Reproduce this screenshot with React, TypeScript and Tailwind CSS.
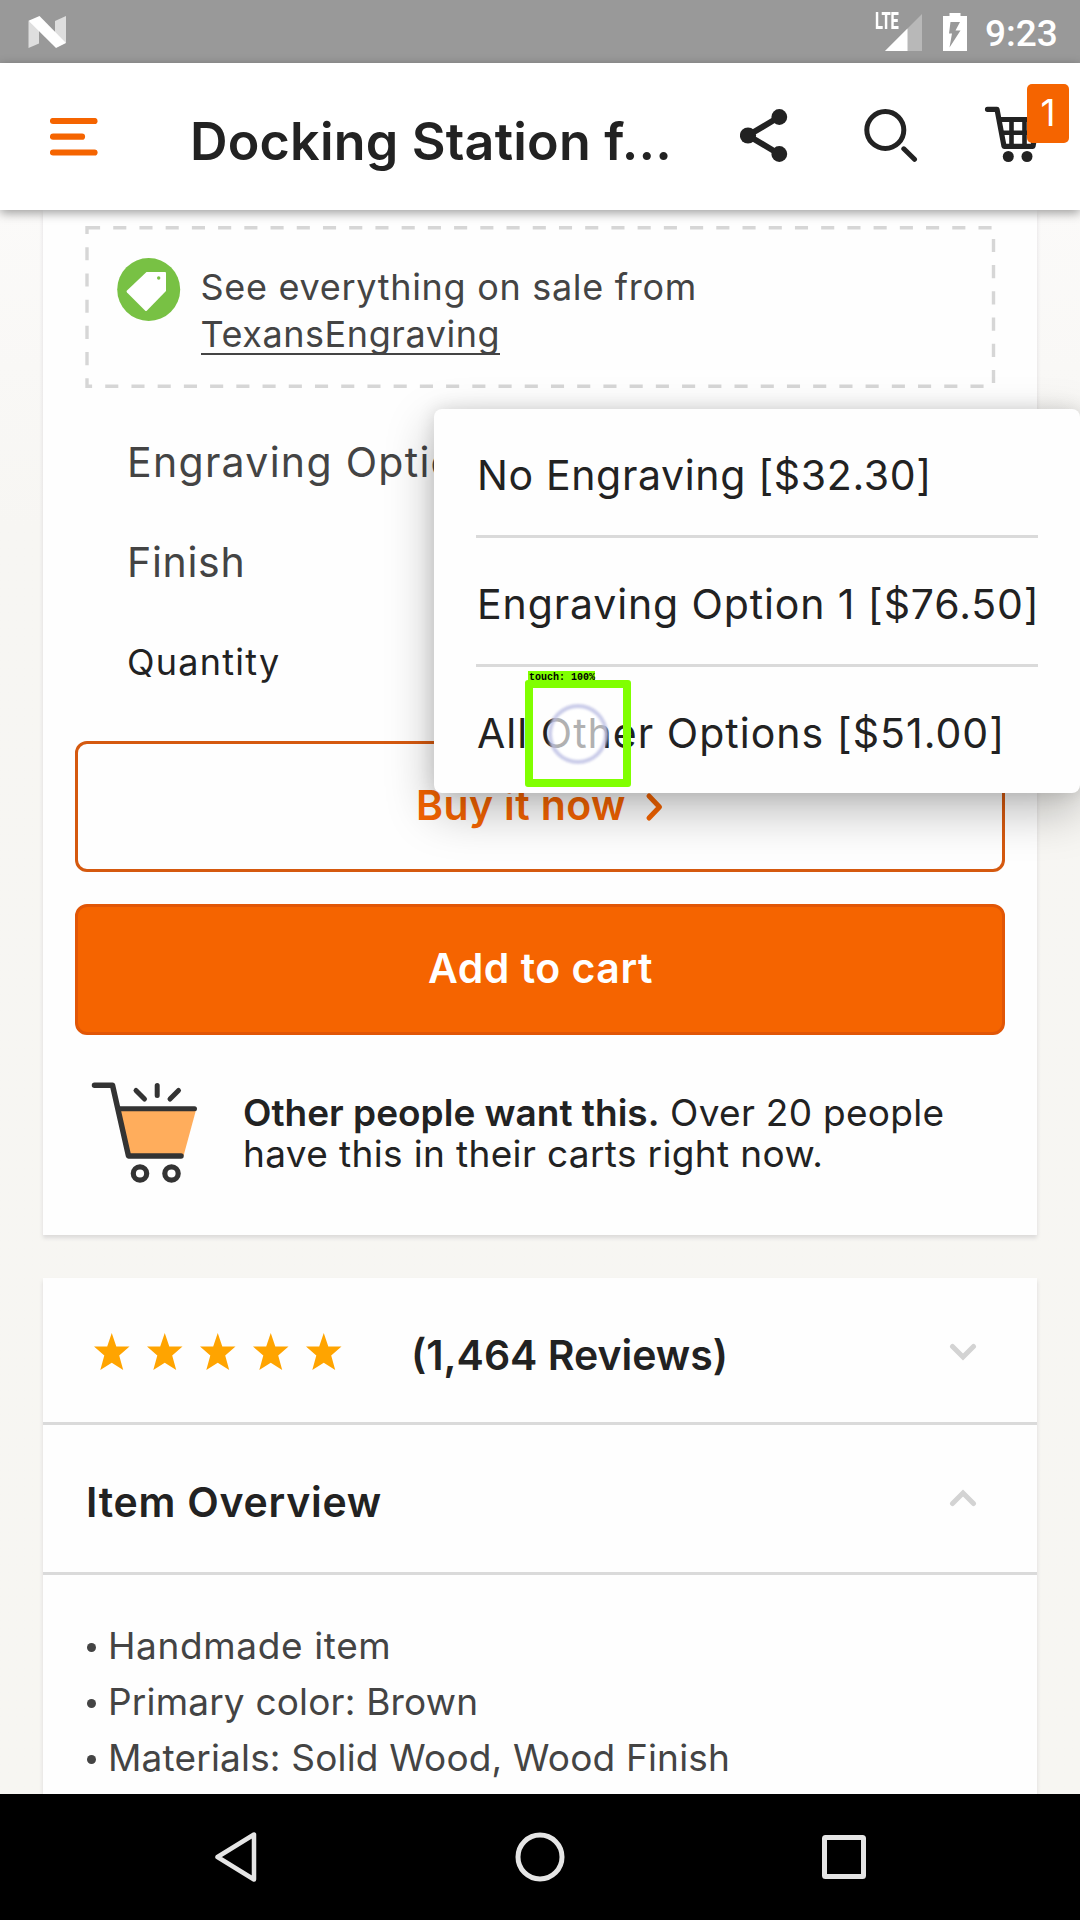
import type { ReactNode } from "react";

function StatusBar() {
  return (
    <div className="flex h-[63px] shrink-0 items-center bg-[#999999] pl-7 pr-[19px] text-white">
      <svg width="38" height="32" viewBox="0 0 38 32">
        <path d="M0.5 5L11 9V27.500L0.500 32z" fill="#dedede" />
        <path d="M27 5L38 0V27L27 23z" fill="#dedede" />
        <path d="M0.500 4.700L11.500 0L38 27L28 32z" fill="#fff" />
      </svg>
      <div className="ml-auto flex items-center">
        <div className="relative h-[38px] w-[46px]">
          <svg className="absolute left-[9px] top-px" width="37" height="37" viewBox="0 0 37 37">
            <path d="M37 0V37H0z" fill="#b8b8b8" />
            <path d="M22.500 14.500V37H0z" fill="#fff" />
          </svg>
          <span className="absolute left-[-1px] top-[-2px] origin-left scale-x-[0.64] font-['Roboto'] text-[23px] font-extrabold leading-[22px]">
            LTE
          </span>
        </div>
        <svg className="ml-[21px]" width="24" height="38" viewBox="0 0 24 38">
          <path d="M6.500 0H17.500V3H24V38H0V3H6.500z" fill="#fff" />
          <path d="M7.500 9H17L12.500 17.500H17.500L6.500 34.500L9 20.500H6z" fill="#999" />
        </svg>
        <span className="ml-[18px] mt-[3px] w-[76px] whitespace-nowrap font-['Roboto'] text-[37px] font-medium leading-none">9:23</span>
      </div>
    </div>
  );
}

function Header() {
  return (
    <header className="relative z-10 flex h-[147px] shrink-0 bg-white shadow-[0_3px_10px_rgba(0,0,0,0.38)]">
      <svg className="ml-[50px] mt-[55px] shrink-0" width="48" height="38" viewBox="0 0 48 38">
        <g stroke="#f56400" strokeWidth="6.200" strokeLinecap="round">
          <path d="M3 3H44.500" />
          <path d="M3 18.700H32" />
          <path d="M3 34.500H44.500" />
        </g>
      </svg>
      <h1 className="ml-[92px] mt-[44px] w-[550px] whitespace-nowrap text-[52px] font-semibold leading-[70px] tracking-[0.2px] text-[#222]">
        Docking Station f...
      </h1>
      <svg className="mt-[45px] shrink-0" width="48" height="56" viewBox="740 108 48 56">
        <path d="M779 117L748 135.500L779 154" fill="none" stroke="#222" strokeWidth="6" />
        <circle cx="779.300" cy="117" r="7.900" fill="#222" />
        <circle cx="748" cy="135.500" r="8.100" fill="#222" />
        <circle cx="779.300" cy="154" r="7.900" fill="#222" />
      </svg>
      <svg className="ml-[76px] mt-[45px] shrink-0" width="54" height="56" viewBox="864 108 54 56">
        <circle cx="885.300" cy="130" r="18.500" fill="none" stroke="#222" strokeWidth="5" />
        <path d="M903.800 148.800L914.500 159.300" stroke="#222" strokeWidth="5" strokeLinecap="round" />
      </svg>
      <div className="relative ml-[66px] mt-[43px] h-[60px] w-[86px] shrink-0">
        <svg width="56" height="60" viewBox="984 106 56 60">
          <g fill="none" stroke="#222" strokeWidth="5.200" strokeLinejoin="round">
            <path d="M987.500 109.300H997L1004 146.300H1033L1038 119.500H999" strokeLinecap="round" />
            <path d="M1001 132.800H1036" strokeWidth="4.600" />
            <path d="M1011.500 120V146M1024.500 120V146" strokeWidth="4.600" />
          </g>
          <circle cx="1008.300" cy="156.500" r="5.500" fill="#222" />
          <circle cx="1027" cy="156.500" r="5.500" fill="#222" />
        </svg>
        <div className="absolute left-[43px] top-[-22px] flex h-[59px] w-[42px] items-center justify-center rounded-[5px] bg-[#f56400] pb-[2px] text-[37px] leading-none text-white">
          1
        </div>
      </div>
    </header>
  );
}

function SaleBox() {
  return (
    <div className="relative ml-[42px] mt-4 flex h-[162px] w-[911px] text-[36px] text-[#444]">
      <svg className="absolute inset-0" width="911" height="162">
        <path
          d="M2 1.700H908.500V160.300H2Z"
          fill="none"
          stroke="#d6d6d6"
          strokeWidth="3.400"
          strokeDasharray="13.100 13.120"
        />
      </svg>
      <svg className="ml-8 mt-8 shrink-0" width="64" height="64" viewBox="0 0 64 64">
        <circle cx="31.700" cy="31.500" r="31.500" fill="#78c144" />
        <path
          d="M29.500 14H48Q49 14 49 15V33L30 52.500Q29 53.500 28 52.500L10 34.500Q9 33.500 10 32.500z"
          fill="#fff"
        />
        <circle cx="41.700" cy="20" r="1.700" fill="#78c144" />
      </svg>
      <div className="ml-[19.500px] mt-9 whitespace-nowrap leading-[48px]">
        <div className="relative top-px tracking-[0.7px]">See everything on sale from</div>
        <div className="flex">
          <span className="h-[45px] border-b-2 border-[#444] leading-[48px] tracking-[0.56px]">TexansEngraving</span>
        </div>
      </div>
    </div>
  );
}

function PopularCart() {
  return (
    <svg className="ml-[48px] shrink-0" width="108" height="104" viewBox="91 1081 108 104">
      <path d="M120 1110H196L183.500 1156H129z" fill="#ffad5c" />
      <g fill="none" stroke="#333" strokeWidth="5.500" strokeLinecap="round" strokeLinejoin="round">
        <path d="M94.500 1085.200H112.500L128.500 1156H181" />
        <path d="M119 1108.800H194.500" strokeWidth="5" />
        <path d="M136 1090.500L144.500 1099M157.200 1085.500V1095.500M178.500 1090.500L170 1099" strokeWidth="5" />
        <circle cx="140" cy="1173.500" r="6.700" strokeWidth="5.200" />
        <circle cx="171.500" cy="1173.500" r="6.700" strokeWidth="5.200" />
      </g>
    </svg>
  );
}

function OptionRow({ children }: { children: ReactNode }) {
  return <div className="flex h-[100px] items-center pl-[84px] text-[#444]">{children}</div>;
}

function PurchaseCard() {
  return (
    <section className="mx-[43px] flex h-[1025px] shrink-0 flex-col bg-[#fefefe] shadow-[0_3px_4px_rgba(60,50,70,0.14)]">
      <SaleBox />
      <div className="mt-6 text-[41px] leading-[50px]">
        <OptionRow>
          <span className="whitespace-nowrap tracking-[1.29px]">Engraving Options</span>
        </OptionRow>
        <OptionRow>
          <span className="tracking-[0.7px]">Finish</span>
        </OptionRow>
        <OptionRow>
          <span className="text-[36px] tracking-[1.25px] text-[#222]">Quantity</span>
        </OptionRow>
      </div>
      <button className="ml-8 mt-[29px] flex h-[131px] w-[930px] items-center rounded-xl border-[3px] border-[#d5590f] pl-[338px] text-[41px] font-semibold text-[#f56400]">
        <span className="mb-[3px] whitespace-nowrap leading-[50px] tracking-[0.38px]">Buy it now</span>
        <svg className="ml-[19px]" width="20" height="30" viewBox="0 0 20 30">
          <path
            d="M4 4L14.500 15L4 26"
            fill="none"
            stroke="#f56400"
            strokeWidth="5"
            strokeLinecap="round"
            strokeLinejoin="round"
          />
        </svg>
      </button>
      <button className="ml-8 mt-8 flex h-[131px] w-[930px] items-center rounded-xl border-[3px] border-[#e15606] bg-[#f56400] pl-[350px] text-[41px] font-semibold text-white">
        <span className="mb-[3px] whitespace-nowrap leading-[50px] tracking-[0.5px]">Add to cart</span>
      </button>
      <div className="flex h-[196px] items-center">
        <PopularCart />
        <p className="ml-[44px] whitespace-nowrap text-[37px] leading-[41px] text-[#222]">
          <span className="font-semibold">Other people want this.</span>
          <span className="tracking-[0.28px]"> Over 20 people</span>
          <br />
          <span className="tracking-[0.36px]">have this in their carts right now.</span>
        </p>
      </div>
    </section>
  );
}

function Stars() {
  return (
    <div className="flex gap-[17.600px]">
      {[0, 1, 2, 3, 4].map((i) => (
        <svg key={i} width="35.500" height="37" viewBox="0 0 35.500 37">
          <path
            d="M17.750 0L22.300 13.500H35.500L25.200 22.600L29.200 37L17.750 29.800L6.300 37L10.300 22.600L0 13.500H13.200z"
            fill="#ffa400"
          />
        </svg>
      ))}
    </div>
  );
}

function Chevron({ up = false }: { up?: boolean }) {
  return (
    <svg width="28" height="18" viewBox="0 0 28 18">
      <path
        d={up ? "M3.500 14.500L14 4L24.500 14.500" : "M3.500 3.500L14 14L24.500 3.500"}
        fill="none"
        stroke="#d3d3d3"
        strokeWidth="5"
        strokeLinecap="round"
      />
    </svg>
  );
}

const FACTS = [
  { text: "Handmade item", tracking: "tracking-[0.62px]" },
  { text: "Primary color: Brown", tracking: "tracking-[0.18px]" },
  { text: "Materials: Solid Wood, Wood Finish", tracking: "tracking-[0.18px]" },
];

function DetailsCard() {
  return (
    <section className="mx-[43px] mt-[43px] h-[600px] shrink-0 bg-[#fefefe] shadow-[0_3px_4px_rgba(60,50,70,0.14)]">
      <div className="flex h-[147px] items-center border-b-[3px] border-[#dadada] pl-[51px] pr-[60px] text-[#222]">
        <div className="mt-0.5">
          <Stars />
        </div>
        <span className="ml-[69px] mt-[9px] whitespace-nowrap text-[41px] font-semibold leading-[50px]">
          (1,464 Reviews)
        </span>
        <div className="ml-auto mt-1">
          <Chevron />
        </div>
      </div>
      <div className="flex h-[150px] items-center justify-between border-b-[3px] border-[#dadada] pl-[43px] pr-[60px] text-[#222]">
        <span className="mt-[7px] whitespace-nowrap text-[41px] font-semibold leading-[50px] tracking-[0.74px]">
          Item Overview
        </span>
        <div className="-mt-0.5">
          <Chevron up />
        </div>
      </div>
      <ul className="pl-[43px] pt-[43px] text-[37px] leading-[56px] text-[#444]">
        {FACTS.map(({ text, tracking }) => (
          <li key={text} className="flex items-center whitespace-nowrap">
            <span className="ml-px mr-3 mt-0.5 size-[9px] rounded-full bg-[#444]" />
            <span className={tracking}>{text}</span>
          </li>
        ))}
      </ul>
    </section>
  );
}

function OptionsMenu() {
  return (
    <div className="absolute left-[434px] top-[409px] z-20 h-[384px] w-[646px] rounded-lg bg-[#fefefe] pl-[42px] text-[41px] text-[#222] shadow-[0_18px_48px_rgba(0,0,0,0.27),0_0_18px_rgba(0,0,0,0.12)]">
      <div className="flex h-[129px] w-[562px] items-center whitespace-nowrap border-b-[3px] border-[#dadada] pl-px pt-[6px] leading-[50px] tracking-[0.65px]">
        No Engraving [$32.30]
      </div>
      <div className="flex h-[129px] w-[562px] items-center whitespace-nowrap border-b-[3px] border-[#dadada] pl-px pt-[6px] leading-[50px] tracking-[0.88px]">
        Engraving Option 1 [$76.50]
      </div>
      <div className="flex h-[129px] w-[562px] items-center whitespace-nowrap pl-px pt-[2px] leading-[50px] tracking-[1.02px]">
        All Other Options [$51.00]
      </div>
    </div>
  );
}

function TouchMarker() {
  return (
    <div className="absolute left-[525px] top-[671px] z-30 h-[117px] w-[106px]">
      <div className="absolute left-[23px] top-[33px] size-[60px] rounded-full border-[4px] border-[#b4b7e0]/70 bg-white/65 blur-[1px]" />
      <div className="absolute left-0 top-[9px] h-[107px] w-[106px] rounded-[3px] border-8 border-[#80ff00]" />
      <div className="absolute left-[3px] top-0 h-[13px] w-[67px] whitespace-nowrap bg-[#80ff00] pl-px font-['Liberation_Mono'] text-[10px] font-bold leading-[13px] text-black">
        touch: 100%
      </div>
    </div>
  );
}

function NavBar() {
  return (
    <nav className="flex h-[126px] shrink-0 items-center justify-between bg-black pl-[213px] pr-[213px]">
      <svg width="46" height="54" viewBox="0 0 46 54">
        <path d="M41 4.500V49.500L4.500 27z" fill="none" stroke="#e5e5e5" strokeWidth="4.500" strokeLinejoin="round" />
      </svg>
      <svg width="52" height="52" viewBox="0 0 52 52">
        <circle cx="26" cy="26" r="22" fill="none" stroke="#e5e5e5" strokeWidth="5" />
      </svg>
      <svg width="46" height="46" viewBox="0 0 46 46">
        <rect x="3.500" y="3.500" width="39" height="39" rx="1" fill="none" stroke="#e5e5e5" strokeWidth="5" />
      </svg>
    </nav>
  );
}

export default function App() {
  return (
    <div className="relative flex h-[1920px] w-[1080px] flex-col overflow-hidden bg-white font-['Inter',sans-serif]">
      <StatusBar />
      <Header />
      <main className="flex min-h-0 flex-1 flex-col overflow-hidden bg-linear-to-b from-[#fbfaf9] via-[#f7f6f3] via-20% to-[#f7f6f2]">
        <PurchaseCard />
        <DetailsCard />
      </main>
      <NavBar />
      <OptionsMenu />
      <TouchMarker />
    </div>
  );
}
